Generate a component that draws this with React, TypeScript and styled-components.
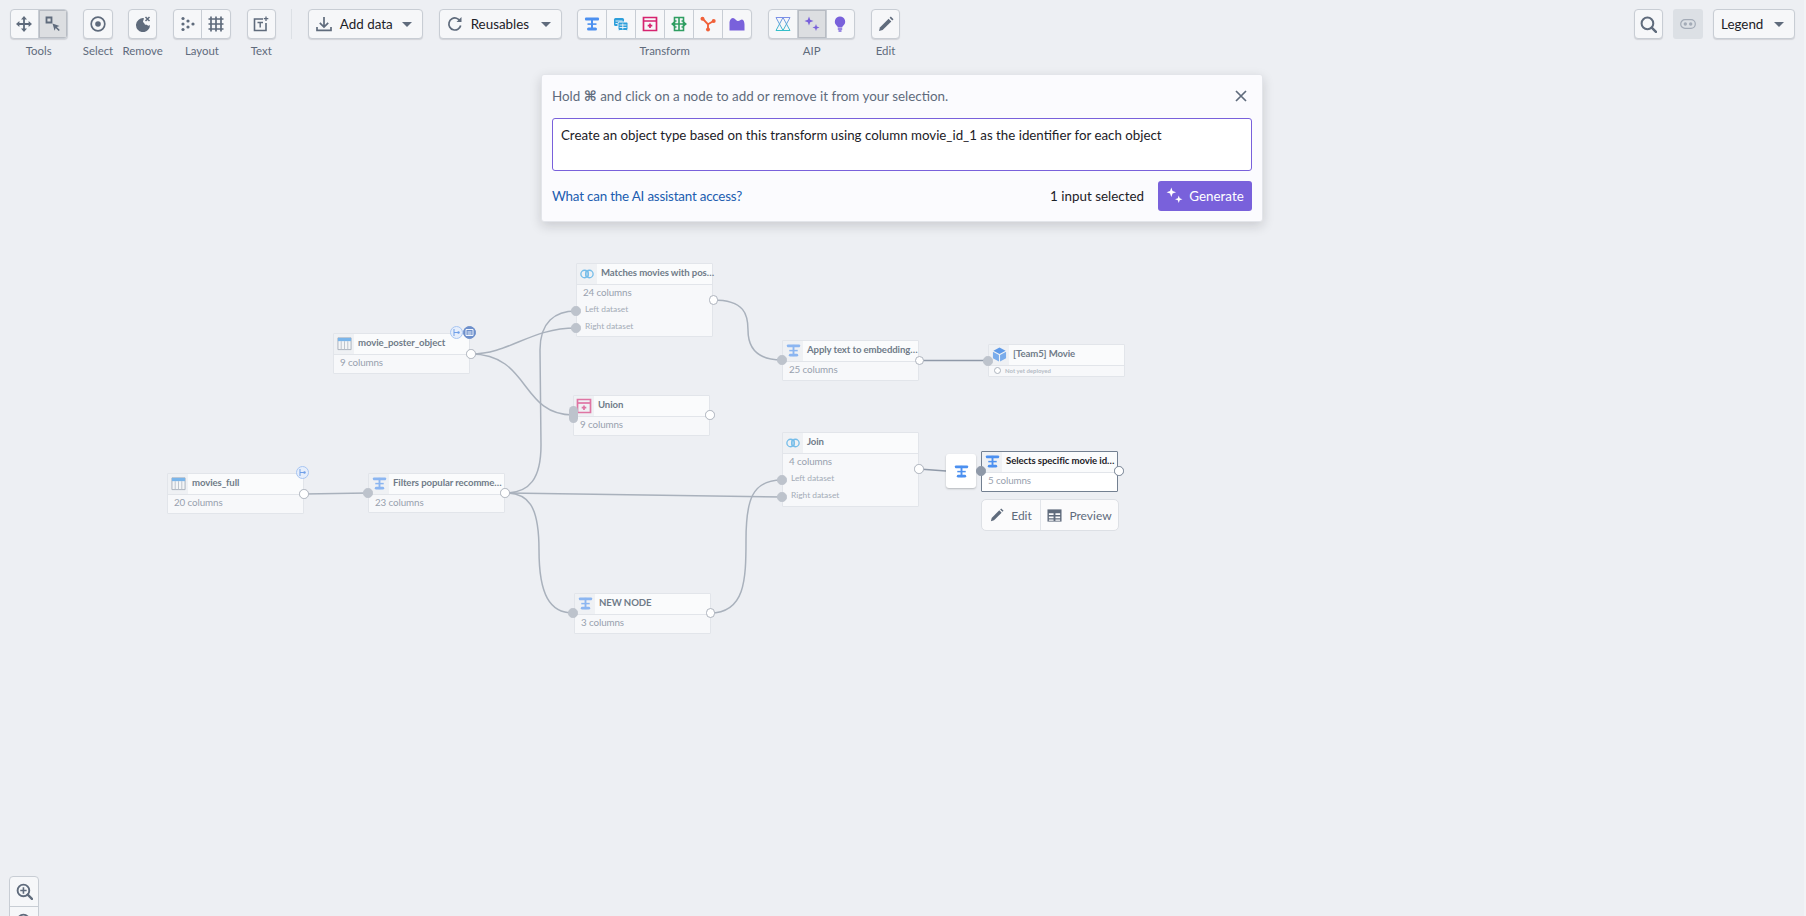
import React, { FunctionComponent } from 'react';
import styled, { createGlobalStyle } from 'styled-components';

const GlobalStyle = createGlobalStyle`
    html, body, #root {
        margin: 0;
        height: 100%;
    }
    body {
        overflow: hidden;
        background: #edeff3;
        font-family: Lato, "Noto Sans", sans-serif;
        color: #1c2127;
    }
`;

const Page = styled.div`
    height: 100vh;
    box-sizing: border-box;
    border-right: 2px solid #f2f3f6;
    display: flex;
    flex-direction: column;
    overflow: hidden;
    position: relative;
    background: #edeff3;
`;

const Toolbar = styled.div`
    height: 66px;
    flex: none;
    box-sizing: border-box;
    padding: 9px 9px 0 9.5px;
    display: flex;
    align-items: flex-start;
    gap: 15.5px;
`;

const Spacer = styled.div`
    flex: 1;
`;

const RightTools = styled.div`
    display: flex;
    align-items: flex-start;
    gap: 10px;
`;

const ToolItem = styled.div`
    display: flex;
    flex-direction: column;
    align-items: center;
`;

const ToolLabel = styled.div`
    width: 0;
    margin-top: 5px;
    display: flex;
    justify-content: center;
    white-space: nowrap;
    font-size: 11.4px;
    line-height: 14px;
    color: #5f6b7c;
`;

const ButtonRow = styled.div<{ $n: number }>`
    display: flex;
    width: ${p => p.$n * 29.2}px;
    height: 30px;
    box-sizing: border-box;
    border: 1px solid #c8cdd4;
    border-radius: 4px;
    background: #f6f7f9;
    box-shadow: 0 1px 1px rgba(17, 20, 24, 0.12);
    overflow: hidden;
`;

const IconButton = styled.div<{ $active?: boolean }>`
    flex: 1;
    min-width: 0;
    display: flex;
    align-items: center;
    justify-content: center;
    background: ${p => (p.$active ? '#dcdee1' : 'transparent')};
    box-shadow: ${p => (p.$active ? 'inset 0 0 0 1px #b8bcc3' : 'none')};
    & + & {
        border-left: 1px solid #c8cdd4;
    }
`;

const Separator = styled.div`
    width: 1px;
    height: 30px;
    background: #dce0e5;
`;

const DropButton = styled.div<{ $width: number }>`
    width: ${p => p.$width}px;
    height: 30px;
    box-sizing: border-box;
    border: 1px solid #c8cdd4;
    border-radius: 4px;
    background: #f6f7f9;
    box-shadow: 0 1px 1px rgba(17, 20, 24, 0.12);
    display: flex;
    align-items: center;
    gap: 8px;
    padding: 0 10px 0 7px;
    font-size: 13.4px;
    color: #1c2127;
`;

const DropText = styled.span`
    flex: 1;
`;

const Caret = styled.span`
    width: 0;
    height: 0;
    border-left: 5px solid transparent;
    border-right: 5px solid transparent;
    border-top: 5.5px solid #5f6b7c;
`;

const PlainBlock = styled.div`
    width: 30px;
    height: 30px;
    border-radius: 3px;
    background: #dce0e5;
    display: flex;
    align-items: center;
    justify-content: center;
`;

const Canvas = styled.div`
    flex: 1;
    position: relative;
`;

const Graph = styled.div`
    position: absolute;
    left: 0;
    top: -66px;
    width: 1804px;
    height: 916px;
`;

const EdgeLayer = styled.svg`
    position: absolute;
    left: 0;
    top: 0;
`;

const Node = styled.div<{ $x: number; $y: number; $h: number; $selected?: boolean }>`
    position: absolute;
    left: ${p => p.$x}px;
    top: ${p => p.$y}px;
    width: 137px;
    height: ${p => p.$h}px;
    box-sizing: border-box;
    background: ${p => (p.$selected ? '#ffffff' : '#f7f8fa')};
    border: 1px solid ${p => (p.$selected ? '#738091' : '#e2e5ea')};
    border-radius: 1px;
    display: flex;
    flex-direction: column;
`;

const NodeHeader = styled.div`
    height: 19.5px;
    flex: none;
    display: flex;
    align-items: center;
    border-bottom: 1px solid #e2e5ea;
    background: #fafbfc;
`;

const NodeIcon = styled.div`
    width: 20px;
    height: 100%;
    flex: none;
    display: flex;
    align-items: center;
    justify-content: center;
    background: #eff1f4;
`;

const NodeTitle = styled.div<{ $selected?: boolean }>`
    flex: 1;
    min-width: 0;
    padding: 0 0 3px 4px;
    white-space: nowrap;
    font-size: 9.6px;
    font-weight: 700;
    letter-spacing: -0.1px;
    color: ${p => (p.$selected ? '#1c2127' : '#707b89')};
`;

const NodeRow = styled.div`
    font-size: 9.8px;
    line-height: 12px;
    color: #98a1ae;
    padding: 1px 0 0 6px;
    letter-spacing: -0.1px;
`;

const DatasetRow = styled.div`
    font-size: 8.4px;
    line-height: 17.3px;
    color: #a4acb7;
    padding-left: 8px;
`;

const DatasetRows = styled.div`
    margin-top: 3px;
`;

const StatusRow = styled.div`
    display: flex;
    align-items: center;
    gap: 4px;
    height: 12px;
    padding-left: 5px;
    font-size: 6px;
    font-weight: 700;
    color: #b4bbc5;
`;

const StatusDot = styled.span`
    width: 7px;
    height: 7px;
    box-sizing: border-box;
    border: 1px solid #adb4be;
    border-radius: 50%;
    background: #fff;
`;

const Port = styled.div<{ $x: number; $y: number; $kind: 'in' | 'out' | 'inDark' | 'outDark' }>`
    position: absolute;
    left: ${p => p.$x - 4.75}px;
    top: ${p => p.$y - 4.75}px;
    width: 9.5px;
    height: 9.5px;
    box-sizing: border-box;
    border-radius: 50%;
    background: ${p => (p.$kind === 'in' ? '#bdc3cc' : p.$kind === 'inDark' ? '#8f99a8' : '#ffffff')};
    border: 1.3px solid ${p => (p.$kind === 'in' ? '#bdc3cc' : p.$kind === 'inDark' ? '#8f99a8' : p.$kind === 'outDark' ? '#738091' : '#adb3bd')};
`;

const PillPort = styled.div`
    position: absolute;
    left: 568.5px;
    top: 406px;
    width: 9px;
    height: 17px;
    border-radius: 4.5px;
    background: #bdc3cc;
`;

const Badge = styled.div<{ $x: number; $y: number; $dark?: boolean }>`
    position: absolute;
    left: ${p => p.$x - 6.5}px;
    top: ${p => p.$y - 6.5}px;
    width: 13px;
    height: 13px;
    box-sizing: border-box;
    border-radius: 50%;
    border: 1px solid ${p => (p.$dark ? '#6d8fcb' : '#a7c5f2')};
    background: ${p => (p.$dark ? '#6d8fcb' : '#e6eefb')};
    display: flex;
    align-items: center;
    justify-content: center;
`;

const FloatingTransform = styled.div`
    position: absolute;
    left: 946px;
    top: 454px;
    width: 30px;
    height: 34px;
    border-radius: 3px;
    background: #ffffff;
    box-shadow: 0 1px 2px rgba(17, 20, 24, 0.25);
    display: flex;
    align-items: center;
    justify-content: center;
`;

const ActionBar = styled.div`
    position: absolute;
    left: 981px;
    top: 499px;
    width: 138px;
    height: 32px;
    box-sizing: border-box;
    background: #fbfbfc;
    border: 1px solid #dde0e5;
    border-radius: 5px;
    display: flex;
    align-items: center;
    font-size: 12px;
    color: #5f6b7c;
`;

const ActionItem = styled.div<{ $width: number }>`
    width: ${p => p.$width}px;
    height: 100%;
    flex: none;
    box-sizing: border-box;
    display: flex;
    align-items: center;
    justify-content: center;
    gap: 7px;
    & + & {
        border-left: 1px solid #e2e5ea;
    }
`;

const PromptPanel = styled.div`
    position: absolute;
    left: 541px;
    top: 7.5px;
    width: 722px;
    height: 148px;
    box-sizing: border-box;
    padding: 0 10px;
    background: #fbfbfe;
    border-radius: 3px;
    border: 1px solid #e3e5ea;
    box-shadow: 0 4px 12px rgba(17, 20, 24, 0.16);
    display: flex;
    flex-direction: column;
`;

const PromptHead = styled.div`
    height: 43px;
    flex: none;
    display: flex;
    align-items: center;
    justify-content: space-between;
    font-size: 13.4px;
    color: #5f6b7c;
    svg {
        margin-right: 5px;
    }
`;

const Cmd = styled.span`
    font-family: "DejaVu Sans", sans-serif;
    font-weight: 700;
    font-size: 14px;
`;

const PromptInput = styled.textarea`
    height: 53px;
    flex: none;
    box-sizing: border-box;
    padding: 8px 8px;
    resize: none;
    outline: none;
    background: #fff;
    border: 1px solid #7961db;
    border-radius: 3px;
    font-family: Lato, "Noto Sans", sans-serif;
    font-size: 13.3px;
    line-height: 17px;
    color: #1c2127;
`;

const PromptFoot = styled.div`
    flex: 1;
    display: flex;
    align-items: center;
    font-size: 13.4px;
`;

const AccessLink = styled.a`
    flex: 1;
    color: #215db0;
    text-decoration: none;
    letter-spacing: -0.2px;
`;

const SelectedCount = styled.span`
    margin-right: 14px;
    color: #1c2127;
`;

const GenerateButton = styled.button`
    width: 94px;
    height: 30px;
    border: 0;
    border-radius: 3px;
    background: #7961db;
    color: #fff;
    font-family: Lato, "Noto Sans", sans-serif;
    font-size: 13.4px;
    display: flex;
    align-items: center;
    justify-content: center;
    gap: 6px;
    padding: 0;
`;

const ZoomStack = styled.div`
    position: absolute;
    left: 9px;
    top: 810px;
    width: 30px;
    box-sizing: border-box;
    border: 1px solid #c8cdd4;
    border-radius: 4px;
    background: #f6f7f9;
`;

const ZoomButton = styled.div`
    height: 29px;
    display: flex;
    align-items: center;
    justify-content: center;
    & + & {
        border-top: 1px solid #c8cdd4;
    }
`;

const GRAY = '#5f6b7c';
const BLUE = '#4c90f0';

const Svg: FunctionComponent<{ size?: number; opacity?: number; children: React.ReactNode }> = ({ size = 16, opacity, children }) => (
    <svg width={size} height={size} viewBox="0 0 16 16" opacity={opacity} fill="none">
        {children}
    </svg>
);

const MoveIcon = () => (
    <Svg>
        <path d="M8 1v14M1 8h14" stroke={GRAY} strokeWidth="1.8" />
        <path d="M8 0l3 3.4H5zM8 16l3-3.4H5zM0 8l3.4-3v6zM16 8l-3.4-3v6z" fill={GRAY} />
    </Svg>
);

const SelectBoxIcon = () => (
    <Svg>
        <path d="M1.5 1.5h5v5h-5z" stroke={GRAY} strokeWidth="1.8" />
        <path d="M7.5 7.5l7 2.4-2.7 1.1 3 3-1.1 1.1-3-3-1.1 2.7z" fill={GRAY} />
    </Svg>
);

const TargetIcon = () => (
    <Svg>
        <circle cx="8" cy="8" r="6.8" stroke={GRAY} strokeWidth="1.7" />
        <circle cx="8" cy="8" r="2.8" fill={GRAY} />
    </Svg>
);

const RemoveIcon = () => (
    <Svg>
        <path d="M9 2.2A7 7 0 1 0 15 9c-1 1-2.3.8-3-.3-1.2.4-2.4-.2-2.7-1.5C8 6.800 7.600 5 8.500 4.200 8.600 3.400 8.700 2.800 9 2.200z" fill={GRAY} />
        <path d="M10.500 1l4 4m0-4l-4 4" stroke={GRAY} strokeWidth="1.500" />
    </Svg>
);

const DotsIcon = () => (
    <Svg>
        {[[3, 2.5], [3, 8], [3, 13.5], [8, 5], [8, 11], [13, 8]].map(([x, y]) => (
            <circle key={`${x}-${y}`} cx={x} cy={y} r="1.600" fill={GRAY} />
        ))}
    </Svg>
);

const GridIcon = () => (
    <Svg>
        <path d="M3 0.500v15M8 0.500v15M13 0.500v15M0.500 3h15M0.500 8h15M0.500 13h15" stroke={GRAY} strokeWidth="1.700" />
    </Svg>
);

const TextIcon = () => (
    <Svg>
        <path d="M10 3H1.500v11.500H13V7" stroke={GRAY} strokeWidth="1.600" />
        <path d="M4.500 6.500h5.500M7.200 6.500v5" stroke={GRAY} strokeWidth="1.400" />
        <path d="M13 0.500v4.500M10.800 2.700h4.500" stroke={GRAY} strokeWidth="1.300" />
    </Svg>
);

const ImportIcon = () => (
    <Svg>
        <path d="M8 1v9.500M3.800 6.800L8 11l4.200-4.200" stroke={GRAY} strokeWidth="1.700" />
        <path d="M1 11v3.300h14V11" stroke={GRAY} strokeWidth="1.700" />
    </Svg>
);

const RefreshIcon = () => (
    <Svg>
        <path d="M13.700 9.500A6 6 0 1 1 9.500 2.200c1.500.4 2.800 1.400 3.700 2.800" stroke={GRAY} strokeWidth="1.700" />
        <path d="M14.500 1v5h-5z" fill={GRAY} />
    </Svg>
);

const TransformIcon: FunctionComponent<{ size?: number; opacity?: number }> = ({ size, opacity }) => (
    <Svg size={size} opacity={opacity}>
        <rect x="1" y="1.500" width="14" height="3" rx="1" fill={BLUE} />
        <rect x="7" y="2" width="2" height="12" fill={BLUE} />
        <rect x="3.500" y="7.300" width="9" height="1.600" fill={BLUE} />
        <rect x="3" y="11.500" width="10" height="3" rx="1.500" fill={BLUE} />
    </Svg>
);

const StackTableIcon = () => (
    <Svg>
        <rect x="1" y="2" width="10" height="8" rx="1.500" fill="#2d9fdb" />
        <rect x="5" y="6" width="10" height="8.500" rx="1.500" fill="#2d9fdb" stroke="#f6f7f9" strokeWidth="1" />
        <path d="M2.500 5h7M2.500 7.500h2M6.500 9h7M6.500 11.500h7M9.800 7.500v6" stroke="#f6f7f9" strokeWidth=".9" />
    </Svg>
);

const UnionIcon: FunctionComponent<{ opacity?: number }> = ({ opacity }) => (
    <Svg opacity={opacity}>
        <path d="M1.500 1.500h13v13h-13z" stroke="#d6236f" strokeWidth="1.700" />
        <path d="M1.500 5h13" stroke="#d6236f" strokeWidth="1.700" />
        <path d="M8 7.500v4.500M5.700 9.700h4.600" stroke="#d6236f" strokeWidth="1.700" />
    </Svg>
);

const PivotIcon = () => (
    <Svg>
        <path d="M3.500 1.500h9v13h-9zM8 1.500v13M3.500 5h2M10.500 5h2M3.500 11h2M10.500 11h2" stroke="#2f9e62" strokeWidth="1.600" />
        <path d="M1 8h14" stroke="#2f9e62" strokeWidth="1.600" />
        <path d="M0 8l3-2.500v5zM16 8l-3-2.500v5z" fill="#2f9e62" />
    </Svg>
);

const ForkIcon = () => (
    <Svg>
        <path d="M3 3l5 5.300M13.500 5L8 8.300M8 8.300V13.500" stroke="#f0613a" strokeWidth="1.900" />
        <circle cx="2.500" cy="2.800" r="2" fill="#f0613a" />
        <circle cx="13.700" cy="5" r="2" fill="#f0613a" />
        <circle cx="8" cy="13.500" r="2" fill="#f0613a" />
    </Svg>
);

const AreaIcon = () => (
    <Svg>
        <path d="M0.500 14.500V6C1 3.500 2.500 2 4 2c2 0 2.500 2.500 4.500 3C10.500 5.500 11.500 3.500 13 3.500c1.500 0 2.500 2.500 2.500 5v6z" fill="#7961db" />
    </Svg>
);

const HourglassIcon = () => (
    <svg width="16" height="16" viewBox="0 0 16 16" fill="none">
        <defs>
            <linearGradient id="hourglass" gradientUnits="userSpaceOnUse" x1="0" y1="1" x2="0" y2="15">
                <stop offset="0" stopColor="#7f8ee8" />
                <stop offset="1" stopColor="#32c0c8" />
            </linearGradient>
        </defs>
        <path d="M1 1.500h14M1 14.500h14M1 1.500L8 14.500M8 1.500L1 14.500M8 1.500L15 14.500M15 1.500L8 14.500" stroke="url(#hourglass)" strokeWidth="1" />
    </svg>
);

const SparkleIcon: FunctionComponent<{ color?: string; size?: number }> = ({ color = '#7961db', size }) => (
    <Svg size={size}>
        <path d="M5 0.500l1.200 3.300L9.500 5 6.200 6.200 5 9.500 3.800 6.200 0.500 5l3.300-1.200z" fill={color} />
        <path d="M12 8l.9 2.600 2.600.9-2.600.9L12 15l-.9-2.600-2.600-.9 2.600-.9z" fill={color} />
    </Svg>
);

const BulbIcon = () => (
    <Svg>
        <path d="M8 0.500a5.200 5.200 0 0 0-3 9.400c.6.500.8 1 .8 1.600h4.400c0-.6.2-1.100.8-1.600A5.200 5.200 0 0 0 8 .500z" fill="#7961db" />
        <path d="M5.800 13h4.400M6.500 15h3" stroke="#7961db" strokeWidth="1.300" />
    </Svg>
);

const PencilIcon: FunctionComponent<{ size?: number }> = ({ size }) => (
    <Svg size={size}>
        <path d="M1 15l.9-3.600L10.600 2.700l2.700 2.700-8.700 8.700z" fill={GRAY} />
        <path d="M11.600 1.700l1.200-1.200 2.700 2.700-1.200 1.200z" fill={GRAY} />
    </Svg>
);

const TableIcon: FunctionComponent<{ size?: number }> = ({ size }) => (
    <Svg size={size}>
        <path d="M0.500 1.500h15v13h-15z" fill={GRAY} />
        <path d="M2 5.500h5v2H2zM9 5.500h5v2H9zM2 9h5v1.800H2zM9 9h5v1.800H9zM2 12.300h5V13.500H2zM9 12.300h5V13.500H9z" fill="#fbfbfc" />
    </Svg>
);

const SearchIcon = () => (
    <Svg size={17}>
        <circle cx="7" cy="7" r="5.500" stroke={GRAY} strokeWidth="1.900" />
        <path d="M11 11l4 4" stroke={GRAY} strokeWidth="2.300" strokeLinecap="round" />
    </Svg>
);

const ZoomInIcon = () => (
    <Svg size={17}>
        <circle cx="7" cy="7" r="5.500" stroke={GRAY} strokeWidth="1.800" />
        <path d="M11 11l4 4" stroke={GRAY} strokeWidth="2.200" strokeLinecap="round" />
        <path d="M7 4v6M4 7h6" stroke={GRAY} strokeWidth="1.500" />
    </Svg>
);

const ZoomOutIcon = () => (
    <Svg size={17}>
        <circle cx="7" cy="7" r="5.500" stroke={GRAY} strokeWidth="1.800" />
        <path d="M11 11l4 4" stroke={GRAY} strokeWidth="2.200" strokeLinecap="round" />
        <path d="M4 7h6" stroke={GRAY} strokeWidth="1.500" />
    </Svg>
);

const LinkPillIcon = () => (
    <svg width="16" height="10" viewBox="0 0 16 10" fill="none">
        <rect x="0.700" y="0.700" width="14.600" height="8.600" rx="4.300" stroke="#a3abb7" strokeWidth="1.200" />
        <circle cx="5.300" cy="5" r="1.700" fill="#a3abb7" />
        <circle cx="10.700" cy="5" r="1.700" fill="#a3abb7" />
    </svg>
);

const DatasetIcon = () => (
    <Svg size={15}>
        <path d="M1 2h14v12.500H1z" fill="#f3f5f7" stroke="#a8b0bb" strokeWidth="1" />
        <path d="M1 2h14v3.500H1z" fill="#7ab5ea" />
        <path d="M4.500 5.500v9M8 5.500v9M11.500 5.500v9" stroke="#b9c0ca" strokeWidth="1" />
    </Svg>
);

const JoinIcon = () => (
    <Svg size={14}>
        <circle cx="5.300" cy="8" r="4.300" stroke="#76bde9" strokeWidth="1.500" />
        <circle cx="10.700" cy="8" r="4.300" stroke="#76bde9" strokeWidth="1.500" />
        <path d="M6.800 4.500v7M9.200 4.500v7" stroke="#76bde9" strokeWidth="1.300" />
    </Svg>
);

const CubeIcon = () => (
    <Svg size={15}>
        <path d="M8 0.500l6.500 3.500L8 7.500 1.500 4z" fill="#5f9ae8" />
        <path d="M1 5l6.400 3.500v7L1 12zM15 5L8.600 8.500v7L15 12z" fill="#7aaceb" />
    </Svg>
);

const BranchIcon: FunctionComponent<{ color: string }> = ({ color }) => (
    <svg width="9" height="9" viewBox="0 0 9 9" fill="none">
        <path d="M2 1v7M2 4.500h4" stroke={color} strokeWidth="1" />
        <circle cx="6.500" cy="4.500" r="1.200" fill={color} />
    </svg>
);

const DeployIcon = () => (
    <svg width="9" height="9" viewBox="0 0 9 9" fill="none">
        <path d="M1 1.500h7v6H1z" stroke="#eef3fb" strokeWidth="1" />
        <path d="M2.500 4h4M2.500 6h4" stroke="#eef3fb" strokeWidth="1" />
    </svg>
);

const faded = 0.6;

const nodes = [
    { x: 333, y: 333, h: 41, icon: <DatasetIcon />, title: 'movie_poster_object', rows: '9 columns' },
    { x: 167, y: 473, h: 41, icon: <DatasetIcon />, title: 'movies_full', rows: '20 columns' },
    { x: 368, y: 473, h: 40, icon: <TransformIcon size={15} opacity={faded} />, title: 'Filters popular recomme…', rows: '23 columns' },
    { x: 576, y: 263, h: 74, icon: <JoinIcon />, title: 'Matches movies with pos…', rows: '24 columns', datasets: true },
    { x: 573, y: 395, h: 41, icon: <UnionIcon opacity={faded} />, title: 'Union', rows: '9 columns' },
    { x: 574, y: 593, h: 41, icon: <TransformIcon size={15} opacity={faded} />, title: 'NEW NODE', rows: '3 columns' },
    { x: 782, y: 340, h: 41, icon: <TransformIcon size={15} opacity={faded} />, title: 'Apply text to embedding…', rows: '25 columns' },
    { x: 782, y: 432, h: 75, icon: <JoinIcon />, title: 'Join', rows: '4 columns', datasets: true },
];

const ports: { x: number; y: number; kind: 'in' | 'out' | 'inDark' | 'outDark' }[] = [
    { x: 471, y: 354, kind: 'out' },
    { x: 304, y: 494, kind: 'out' },
    { x: 368, y: 493, kind: 'in' },
    { x: 505, y: 493, kind: 'out' },
    { x: 576, y: 311, kind: 'in' },
    { x: 576, y: 328, kind: 'in' },
    { x: 713.5, y: 300, kind: 'out' },
    { x: 710, y: 415, kind: 'out' },
    { x: 573, y: 613, kind: 'in' },
    { x: 710.5, y: 613, kind: 'out' },
    { x: 782, y: 360, kind: 'in' },
    { x: 919.5, y: 360.5, kind: 'out' },
    { x: 988, y: 361, kind: 'in' },
    { x: 782, y: 480, kind: 'in' },
    { x: 782, y: 497, kind: 'in' },
    { x: 919, y: 469, kind: 'out' },
    { x: 981, y: 471, kind: 'inDark' },
    { x: 1119, y: 471, kind: 'outDark' },
];

const edges = [
    'M471 354C510 354 530 328 576 328',
    'M471 354C530 354 520 415 573 415',
    'M304 494L368 493',
    'M505 493C530 493 541 478 541 445L540 350C540 322 555 311 576 311',
    'M505 493L782 497',
    'M505 493C528 493 539 505 539 550C539 595 550 613 573 613',
    'M713 300C745 300 748 315 748 330C748 350 760 360 782 360',
    'M710 613C745 613 746 580 746 540C746 500 752 480 782 480',
];

const darkEdges = ['M919.500 360.500H988', 'M919 469L946 471', 'M975 471H981'];

const App: FunctionComponent = () => (
    <Page>
        <GlobalStyle />
        <Toolbar>
            <ToolItem>
                <ButtonRow $n={2}>
                    <IconButton><MoveIcon /></IconButton>
                    <IconButton $active><SelectBoxIcon /></IconButton>
                </ButtonRow>
                <ToolLabel>Tools</ToolLabel>
            </ToolItem>
            <ToolItem>
                <ButtonRow $n={1}><IconButton><TargetIcon /></IconButton></ButtonRow>
                <ToolLabel>Select</ToolLabel>
            </ToolItem>
            <ToolItem>
                <ButtonRow $n={1}><IconButton><RemoveIcon /></IconButton></ButtonRow>
                <ToolLabel>Remove</ToolLabel>
            </ToolItem>
            <ToolItem>
                <ButtonRow $n={2}>
                    <IconButton><DotsIcon /></IconButton>
                    <IconButton><GridIcon /></IconButton>
                </ButtonRow>
                <ToolLabel>Layout</ToolLabel>
            </ToolItem>
            <ToolItem>
                <ButtonRow $n={1}><IconButton><TextIcon /></IconButton></ButtonRow>
                <ToolLabel>Text</ToolLabel>
            </ToolItem>
            <Separator />
            <DropButton $width={115.3}>
                <ImportIcon />
                <DropText>Add data</DropText>
                <Caret />
            </DropButton>
            <DropButton $width={123}>
                <RefreshIcon />
                <DropText>Reusables</DropText>
                <Caret />
            </DropButton>
            <ToolItem>
                <ButtonRow $n={6}>
                    <IconButton><TransformIcon /></IconButton>
                    <IconButton><StackTableIcon /></IconButton>
                    <IconButton><UnionIcon /></IconButton>
                    <IconButton><PivotIcon /></IconButton>
                    <IconButton><ForkIcon /></IconButton>
                    <IconButton><AreaIcon /></IconButton>
                </ButtonRow>
                <ToolLabel>Transform</ToolLabel>
            </ToolItem>
            <ToolItem>
                <ButtonRow $n={3}>
                    <IconButton><HourglassIcon /></IconButton>
                    <IconButton $active><SparkleIcon /></IconButton>
                    <IconButton><BulbIcon /></IconButton>
                </ButtonRow>
                <ToolLabel>AIP</ToolLabel>
            </ToolItem>
            <ToolItem>
                <ButtonRow $n={1}><IconButton><PencilIcon /></IconButton></ButtonRow>
                <ToolLabel>Edit</ToolLabel>
            </ToolItem>
            <Spacer />
            <RightTools>
                <ButtonRow $n={1}><IconButton><SearchIcon /></IconButton></ButtonRow>
                <PlainBlock><LinkPillIcon /></PlainBlock>
                <DropButton $width={82}>
                    <DropText>Legend</DropText>
                    <Caret />
                </DropButton>
            </RightTools>
        </Toolbar>
        <Canvas>
            <Graph>
                <EdgeLayer width="1804" height="916" viewBox="0 0 1804 916" fill="none">
                    {edges.map(d => <path key={d} d={d} stroke="#a9b1bc" strokeWidth="1.500" />)}
                </EdgeLayer>
                {nodes.map(n => (
                    <Node key={n.title} $x={n.x} $y={n.y} $h={n.h}>
                        <NodeHeader>
                            <NodeIcon>{n.icon}</NodeIcon>
                            <NodeTitle>{n.title}</NodeTitle>
                        </NodeHeader>
                        <NodeRow>{n.rows}</NodeRow>
                        {n.datasets && (
                            <DatasetRows>
                                <DatasetRow>Left dataset</DatasetRow>
                                <DatasetRow>Right dataset</DatasetRow>
                            </DatasetRows>
                        )}
                    </Node>
                ))}
                <Node $x={988} $y={344} $h={33}>
                    <NodeHeader>
                        <NodeIcon><CubeIcon /></NodeIcon>
                        <NodeTitle>[Team5] Movie</NodeTitle>
                    </NodeHeader>
                    <StatusRow>
                        <StatusDot />
                        Not yet deployed
                    </StatusRow>
                </Node>
                <Node $x={981} $y={451} $h={41} $selected>
                    <NodeHeader>
                        <NodeIcon><TransformIcon size={15} /></NodeIcon>
                        <NodeTitle $selected>Selects specific movie id…</NodeTitle>
                    </NodeHeader>
                    <NodeRow>5 columns</NodeRow>
                </Node>
                <EdgeLayer width="1804" height="916" viewBox="0 0 1804 916" fill="none">
                    {darkEdges.map(d => <path key={d} d={d} stroke="#8f99a8" strokeWidth="1.500" />)}
                </EdgeLayer>
                <FloatingTransform><TransformIcon size={15} /></FloatingTransform>
                <PillPort />
                {ports.map(p => <Port key={`${p.x}-${p.y}`} $x={p.x} $y={p.y} $kind={p.kind} />)}
                <Badge $x={456} $y={332}><BranchIcon color="#6f9fe8" /></Badge>
                <Badge $x={469} $y={332} $dark><DeployIcon /></Badge>
                <Badge $x={302} $y={472}><BranchIcon color="#6f9fe8" /></Badge>
                <ActionBar>
                    <ActionItem $width={58}><PencilIcon size={14} />Edit</ActionItem>
                    <ActionItem $width={78}><TableIcon size={15} />Preview</ActionItem>
                </ActionBar>
            </Graph>
            <PromptPanel>
                <PromptHead>
                    <span>Hold <Cmd>⌘</Cmd> and click on a node to add or remove it from your selection.</span>
                    <svg width="12" height="12" viewBox="0 0 12 12" fill="none">
                        <path d="M1 1l10 10M11 1L1 11" stroke={GRAY} strokeWidth="1.700" />
                    </svg>
                </PromptHead>
                <PromptInput readOnly value="Create an object type based on this transform using column movie_id_1 as the identifier for each object" />
                <PromptFoot>
                    <AccessLink href="#">What can the AI assistant access?</AccessLink>
                    <SelectedCount>1 input selected</SelectedCount>
                    <GenerateButton type="button"><SparkleIcon color="#ffffff" size={17} />Generate</GenerateButton>
                </PromptFoot>
            </PromptPanel>
            <ZoomStack>
                <ZoomButton><ZoomInIcon /></ZoomButton>
                <ZoomButton><ZoomOutIcon /></ZoomButton>
            </ZoomStack>
        </Canvas>
    </Page>
);

export default App;
